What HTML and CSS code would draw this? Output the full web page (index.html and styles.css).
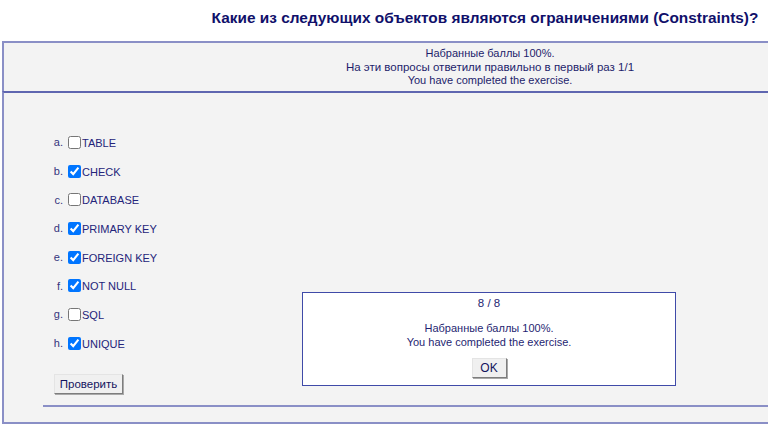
FILE: index.html
```html
<!DOCTYPE html>
<html lang="ru">
<head>
<meta charset="utf-8">
<title>Quiz</title>
<link rel="stylesheet" href="styles.css">
</head>
<body>
<div class="page">
  <h2 class="title">Какие из следующих объектов являются ограничениями (Constraints)?</h2>
  <div class="feedback">
    <div>Набранные баллы 100%.</div>
    <div class="wide">На эти вопросы ответили правильно в первый раз 1/1</div>
    <div>You have completed the exercise.</div>
  </div>
  <div class="quiz">
    <div class="options">
      <div class="row"><span class="letter">a.</span><input type="checkbox" class="cb"><span class="opt">TABLE</span></div>
      <div class="row"><span class="letter">b.</span><input type="checkbox" class="cb" checked><span class="opt">CHECK</span></div>
      <div class="row"><span class="letter">c.</span><input type="checkbox" class="cb"><span class="opt">DATABASE</span></div>
      <div class="row"><span class="letter">d.</span><input type="checkbox" class="cb" checked><span class="opt">PRIMARY KEY</span></div>
      <div class="row"><span class="letter">e.</span><input type="checkbox" class="cb" checked><span class="opt">FOREIGN KEY</span></div>
      <div class="row"><span class="letter">f.</span><input type="checkbox" class="cb" checked><span class="opt">NOT NULL</span></div>
      <div class="row"><span class="letter">g.</span><input type="checkbox" class="cb"><span class="opt">SQL</span></div>
      <div class="row"><span class="letter">h.</span><input type="checkbox" class="cb" checked><span class="opt">UNIQUE</span></div>
    </div>
    <button class="btn check-btn">Проверить</button>
    <div class="rule"></div>
  </div>
  <div class="popup">
    <div class="score">8 / 8</div>
    <div class="msg">
      <div>Набранные баллы 100%.</div>
      <div>You have completed the exercise.</div>
    </div>
    <button class="btn ok-btn">OK</button>
  </div>
</div>
</body>
</html>
```

FILE: styles.css
```css
html, body {
  margin: 0;
  padding: 0;
  overflow: hidden;
  background: #ffffff;
}

body {
  font-family: "Liberation Sans", Arial, sans-serif;
  color: #000066;
}

.page {
  position: relative;
  width: 976px;
  margin-left: 2px;
}

.title {
  margin: 0;
  padding: 8px 10px 0 0;
  height: 33px;
  font-size: 15.4px;
  line-height: 19px;
  font-weight: bold;
  text-align: center;
  color: #10106a;
}

.feedback {
  background: #f3f3f3;
  border: 2px solid #8a8fc6;
  border-bottom: none;
  padding-top: 4px;
  box-sizing: border-box;
  height: 50px;
  font-size: 11px;
  line-height: 13.5px;
  text-align: center;
  color: #1d1d6b;
}

.wide {
  font-size: 11.5px;
}

.quiz {
  background: #f3f3f3;
  border: 2px solid #8a8fc6;
  padding-top: 35px;
  padding-bottom: 14px;
  height: 333px;
  box-sizing: border-box;
  border-top-color: #5f66b0;
}

.options {
  display: flex;
  flex-direction: column;
}

.row {
  display: flex;
  align-items: center;
  height: 28.7px;
  font-size: 11px;
  color: #24247a;
}

.letter {
  width: 59px;
  text-align: right;
  color: #33337d;
}

.cb {
  width: 13px;
  height: 13px;
  margin: 0 1px 0 5px;
}

.opt {
  padding-top: 1px;
}

.btn {
  font-family: "Liberation Sans", Arial, sans-serif;
  font-size: 12px;
  color: #14145e;
  background: #f0f0f0;
  border: 1px solid;
  border-color: #e4e4e4 #7d7d7d #7d7d7d #e4e4e4;
  box-shadow: 1px 1px 0 #a9a9a9;
  padding: 0;
  cursor: pointer;
}

.check-btn {
  display: block;
  margin: 16px 0 0 50px;
  width: 69px;
  height: 20px;
  font-size: 11.5px;
}

.rule {
  margin: 11px 0 0 39px;
  height: 2px;
  background: #8a8fc6;
}

.popup {
  position: absolute;
  left: 300px;
  top: 292px;
  width: 374px;
  height: 94px;
  box-sizing: border-box;
  background: #ffffff;
  border: 1px solid #3f4aa8;
  display: flex;
  flex-direction: column;
  align-items: center;
  font-size: 11px;
  color: #1f1f72;
}

.score {
  margin-top: 3px;
  line-height: 14px;
  font-size: 11.5px;
}

.msg {
  margin-top: 12px;
  line-height: 13.5px;
  text-align: center;
}

.ok-btn {
  margin-top: 9px;
  width: 35px;
  height: 20px;
}
```
